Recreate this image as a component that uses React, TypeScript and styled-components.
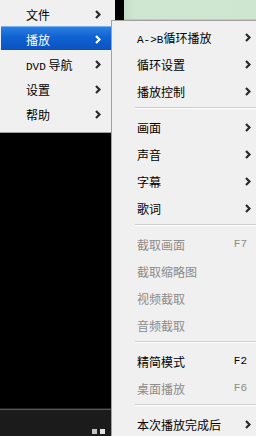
import React from "react";
import styled, { createGlobalStyle } from "styled-components";

const GlobalStyle = createGlobalStyle`
  html, body {
    margin: 0;
    padding: 0;
    background: #000;
  }
  body {
    font-family: "Noto Sans CJK SC", "Liberation Sans", sans-serif;
  }
`;

const Page = styled.div`
  display: flex;
  width: 256px;
  height: 436px;
  overflow: hidden;
  background: #000;
`;

const LeftCol = styled.div`
  width: 111px;
  display: flex;
  flex-direction: column;
`;

const MainMenu = styled.div`
  background: #f0f0f0;
  height: 133px;
  box-sizing: border-box;
  border-bottom: 1px solid #a0a0a0;
  padding-bottom: 2px;
`;

const MainItem = styled.div<{ $active?: boolean }>`
  height: 24px;
  box-sizing: border-box;
  padding: 2px 10px 0 25px;
  margin: 1px 0 1px 1px;
  display: flex;
  align-items: center;
  justify-content: space-between;
  font-size: 12px;
  color: ${(p) => (p.$active ? "#fff" : "#000")};
  background: ${(p) =>
    p.$active ? "linear-gradient(#2f82e4, #1062d2 45%, #0a52bf)" : "transparent"};
  box-shadow: ${(p) => (p.$active ? "inset 0 1px 0 #7ab2f0" : "none")};
`;

const Video = styled.div`
  flex: 1;
  background: #000;
  border-bottom: 1px solid #222;
`;

const ControlBar = styled.div`
  height: 24px;
  background: #1b1b1b;
  border-top: 1px solid #565656;
  display: flex;
  justify-content: flex-end;
  align-items: flex-end;
  gap: 3px;
  padding: 0 6px 2px 0;
`;

const Dot = styled.div<{ $light?: boolean }>`
  width: 5px;
  height: 5px;
  background: ${(p) => (p.$light ? "#e2e2e2" : "#c4c4c4")};
`;

const RightCol = styled.div`
  flex: 1;
  display: flex;
  flex-direction: column;
`;

const TopStrip = styled.div`
  height: 25px;
  display: flex;
`;

const MenuEdge = styled.div`
  width: 4px;
  background: #f0f0f0;
`;

const DarkEdge = styled.div`
  width: 9px;
  background: #000;
`;

const Green = styled.div`
  flex: 1;
  background: linear-gradient(90deg, #c6dcc6, #cfe7d0 12px, #cee6cf);
  border-bottom: 1px solid #b8cdb9;
`;

const SubMenu = styled.div`
  flex: 1;
  background: #f0f0f0;
  border-top: 1px solid #a0a0a0;
  border-left: 1px solid #a0a0a0;
  padding-top: 1px;
  box-sizing: border-box;
`;

const SubItem = styled.div<{ $disabled?: boolean }>`
  height: 27px;
  box-sizing: border-box;
  display: flex;
  align-items: center;
  padding: 3px 5px 0 25px;
  font-size: 12px;
  color: ${(p) => (p.$disabled ? "#8c8c8c" : "#000")};
`;

const Label = styled.span`
  flex: 1;
  white-space: nowrap;
`;

const Latin = styled.span`
  font-family: "Liberation Mono", monospace;
  font-size: 11px;
`;

const Shortcut = styled.span<{ $disabled?: boolean }>`
  font-family: "Liberation Mono", monospace;
  font-size: 11px;
  margin-right: 4px;
  color: ${(p) => (p.$disabled ? "#8c8c8c" : "#000")};
`;

const Separator = styled.div`
  height: 9px;
  display: flex;
  align-items: center;
  padding-left: 23px;
  &::after {
    content: "";
    flex: 1;
    height: 1px;
    background: #cfcfcf;
    border-bottom: 1px solid #fff;
  }
`;

const Arrow = ({ color = "#2a2a2a" }: { color?: string }) => (
  <svg width="6" height="9" viewBox="0 0 6 9">
    <polyline points="1,1 4.5,4.5 1,8" fill="none" stroke={color} strokeWidth="2.2" />
  </svg>
);

type Sub = {
  label: React.ReactNode;
  arrow?: boolean;
  disabled?: boolean;
  key?: string;
} | "sep";

const subItems: Sub[] = [
  { label: <><Latin>A-&gt;B</Latin>循环播放</>, arrow: true },
  { label: "循环设置", arrow: true },
  { label: "播放控制", arrow: true },
  "sep",
  { label: "画面", arrow: true },
  { label: "声音", arrow: true },
  { label: "字幕", arrow: true },
  { label: "歌词", arrow: true },
  "sep",
  { label: "截取画面", disabled: true, key: "F7" },
  { label: "截取缩略图", disabled: true },
  { label: "视频截取", disabled: true },
  { label: "音频截取", disabled: true },
  "sep",
  { label: "精简模式", key: "F2" },
  { label: "桌面播放", disabled: true, key: "F6" },
  "sep",
  { label: "本次播放完成后", arrow: true },
];

const mainItems: { label: React.ReactNode; active?: boolean }[] = [
  { label: "文件" },
  { label: "播放", active: true },
  { label: <><Latin>DVD</Latin> 导航</> },
  { label: "设置" },
  { label: "帮助" },
];

const App: React.FC = () => {
  return (
    <>
      <GlobalStyle />
      <Page>
        <LeftCol>
          <MainMenu>
            {mainItems.map((m, i) => (
              <MainItem key={i} $active={m.active}>
                <Label>{m.label}</Label>
                <Arrow color={m.active ? "#fff" : "#2a2a2a"} />
              </MainItem>
            ))}
          </MainMenu>
          <Video />
          <ControlBar>
            <Dot />
            <Dot $light />
          </ControlBar>
        </LeftCol>
        <RightCol>
          <TopStrip>
            <MenuEdge />
            <DarkEdge />
            <Green />
          </TopStrip>
          <SubMenu>
            {subItems.map((s, i) =>
              s === "sep" ? (
                <Separator key={i} />
              ) : (
                <SubItem key={i} $disabled={s.disabled}>
                  <Label>{s.label}</Label>
                  {s.key && <Shortcut $disabled={s.disabled}>{s.key}</Shortcut>}
                  {s.arrow && <Arrow />}
                </SubItem>
              )
            )}
          </SubMenu>
        </RightCol>
      </Page>
    </>
  );
};

export default App;
